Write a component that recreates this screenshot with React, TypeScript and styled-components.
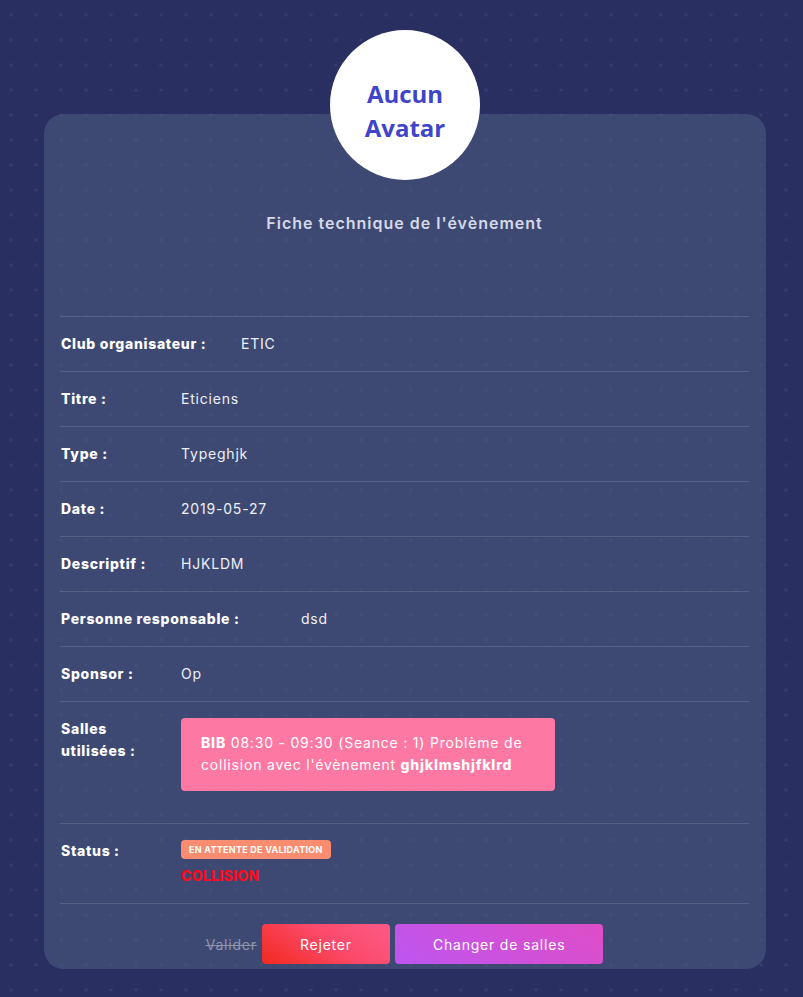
import * as React from 'react';
import styled, { createGlobalStyle } from 'styled-components';

const GlobalStyle = createGlobalStyle`
  html, body {
    margin: 0;
    padding: 0;
  }
  body {
    font-family: Inter, "Noto Sans", sans-serif;
    background-color: #2a2f62;
  }
`;

const Page = styled.div`
  min-height: 100vh;
  box-sizing: border-box;
  padding: 30px 37px 28px 44px;
  background-color: #2a2f62;
  background-image: radial-gradient(circle, rgba(255, 255, 255, 0.07) 1.2px, transparent 1.8px);
  background-size: 25px 25px;
  background-position: -1.5px 2.5px;
`;

const Avatar = styled.div`
  position: relative;
  z-index: 2;
  width: 150px;
  height: 150px;
  box-sizing: border-box;
  padding-top: 12px;
  margin: 0 auto -66px;
  border-radius: 50%;
  background: #ffffff;
  display: flex;
  align-items: center;
  justify-content: center;
  text-align: center;
  font-family: "Open Sans", sans-serif;
  font-weight: 700;
  font-size: 24px;
  line-height: 34px;
  color: #3f45c8;
`;

const Card = styled.div`
  position: relative;
  z-index: 1;
  background: rgba(72, 90, 126, 0.62);
  border-radius: 20px;
  padding: 97px 17px 5px 16px;
  letter-spacing: 0.05em;
`;

const Title = styled.h2`
  margin: 0 0 81px;
  text-align: center;
  font-size: 16px;
  line-height: 24px;
  font-weight: 600;
  letter-spacing: 0.0625em;
  color: #d6d9e7;
`;

const Row = styled.div`
  display: flex;
  align-items: flex-start;
  border-top: 1px solid rgba(255, 255, 255, 0.13);
  padding: 16px 0 16px 1px;
  font-size: 14px;
  line-height: 22px;
  color: #eef0f7;
`;

const Label = styled.div<{ $width: number }>`
  flex: 0 0 ${p => p.$width}px;
  font-weight: 800;
  letter-spacing: 0.05em;
  color: #ffffff;
`;

const Value = styled.div`
  flex: 1;
  min-width: 0;
`;

const Alert = styled.div`
  width: 374px;
  box-sizing: border-box;
  background: #fd78a2;
  border-radius: 4px;
  padding: 14px 8px 15px 20px;
  margin-bottom: 16px;
  color: #ffffff;
  b {
    font-weight: 800;
  }
`;

const Badge = styled.div`
  display: block;
  width: fit-content;
  background: #fa8c6f;
  color: #ffffff;
  border-radius: 4px;
  padding: 0 8px;
  height: 19px;
  line-height: 19px;
  font-size: 9px;
  font-weight: 700;
  letter-spacing: 0.03em;
  text-transform: uppercase;
`;

const Collision = styled.div`
  margin-top: 6px;
  color: #ff0a1a;
  font-weight: 800;
  letter-spacing: 0.02em;
  text-transform: uppercase;
`;

const Actions = styled.div`
  display: flex;
  justify-content: center;
  align-items: center;
  gap: 5px;
  border-top: 1px solid rgba(255, 255, 255, 0.13);
  padding-top: 20px;
`;

const Disabled = styled.span`
  color: #8e95ac;
  font-size: 14px;
  text-decoration: line-through;
`;

const Button = styled.button<{ $variant: 'danger' | 'purple' }>`
  height: 40px;
  padding: 0 38px;
  border: none;
  border-radius: 4px;
  color: #ffffff;
  font-family: inherit;
  font-size: 14px;
  letter-spacing: inherit;
  cursor: pointer;
  background: ${p =>
    p.$variant === 'danger'
      ? 'linear-gradient(35deg, #f2291f 0%, #fb4a6a 55%, #fd5a88 100%)'
      : 'linear-gradient(35deg, #bd56f1 0%, #d250d6 60%, #de4ec6 100%)'};
`;

type Field = { label: string; value: string; width: number };

const fields: Field[] = [
  { label: 'Club organisateur :', value: 'ETIC', width: 180 },
  { label: 'Titre :', value: 'Eticiens', width: 120 },
  { label: 'Type :', value: 'Typeghjk', width: 120 },
  { label: 'Date :', value: '2019-05-27', width: 120 },
  { label: 'Descriptif :', value: 'HJKLDM', width: 120 },
  { label: 'Personne responsable :', value: 'dsd', width: 240 },
  { label: 'Sponsor :', value: 'Op', width: 120 },
];

export default function App() {
  return (
    <Page>
      <GlobalStyle />
      <Avatar>
        Aucun
        <br />
        Avatar
      </Avatar>
      <Card>
        <Title>Fiche technique de l'évènement</Title>
        {fields.map(f => (
          <Row key={f.label}>
            <Label $width={f.width}>{f.label}</Label>
            <Value>{f.value}</Value>
          </Row>
        ))}
        <Row>
          <Label $width={120}>
            Salles
            <br />
            utilisées :
          </Label>
          <Value>
            <Alert>
              <b>BIB</b> 08:30 - 09:30 (Seance : 1) Problème de collision avec l'évènement{' '}
              <b>ghjklmshjfklrd</b>
            </Alert>
          </Value>
        </Row>
        <Row>
          <Label $width={120}>Status :</Label>
          <Value>
            <Badge>En attente de validation</Badge>
            <Collision>Collision</Collision>
          </Value>
        </Row>
        <Actions>
          <Disabled>Valider</Disabled>
          <Button $variant="danger">Rejeter</Button>
          <Button $variant="purple">Changer de salles</Button>
        </Actions>
      </Card>
    </Page>
  );
}
